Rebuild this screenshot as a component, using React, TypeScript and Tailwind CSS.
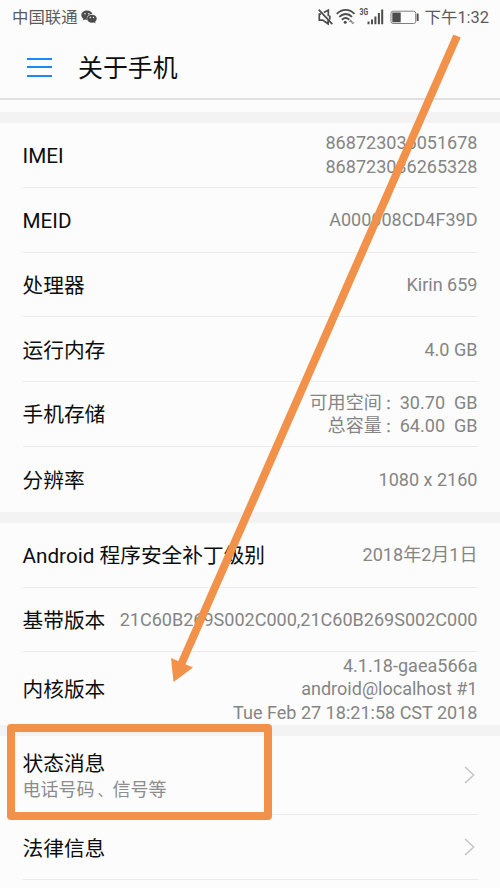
import type { ReactNode } from "react";

const label = "text-[20.7px] leading-[26px] text-[#0d0d0d] whitespace-nowrap";
const value = "pb-[2px] text-[18.05px] leading-[23.7px] text-[#858585] text-right whitespace-pre";

function Mark({ children }: { children: string }) {
  return <span className="pl-[3px] text-[15px] leading-none">{children}</span>;
}

function Row({ title, lines, last = false, className = "h-[64.8px]" }: { title: string; lines: ReactNode[]; last?: boolean; className?: string }) {
  return (
    <div className={`mx-[22.5px] flex shrink-0 items-center justify-between pt-[2.5px] ${last ? "" : "border-b border-[#ebebeb]"} ${className}`}>
      <span className={label}>{title}</span>
      <div className={value}>
        {lines.map((line, i) => (
          <div key={i}>{line}</div>
        ))}
      </div>
    </div>
  );
}

function Chevron() {
  return (
    <svg className="mr-[3px] h-[18px] w-[11px]" viewBox="0 0 11 18" fill="none" stroke="#c6c6c6" strokeWidth="1.6">
      <path d="M1 1 9.6 9 1 17" />
    </svg>
  );
}

function LinkRow({ children, className }: { children: ReactNode; className: string }) {
  return (
    <div className={`mx-[22.5px] flex shrink-0 items-center justify-between border-b border-[#ebebeb] ${className}`}>
      <div className="pt-[4.5px]">{children}</div>
      <Chevron />
    </div>
  );
}

function Band() {
  return <div className="h-[11px] shrink-0 bg-[#f3f3f3]" />;
}

function WeChat() {
  return (
    <svg className="ml-[3px] h-[14px] w-[16px]" viewBox="0 0 16 14">
      <path fill="#4c4c4c" d="M6 .4C2.8.4.3 2.5.3 5.1c0 1.5.8 2.8 2.1 3.7L2 10.6l2-1 2 .3C5.200 6.500 7.600 4 11.500 4 11 1.900 8.700.4 6 .4Z" />
      <ellipse cx="10.900" cy="8.700" rx="4.800" ry="4" fill="#4c4c4c" />
      <path fill="#4c4c4c" d="m12.500 12 2 1.500-.4-2.300z" />
      <g fill="#fcfcfc">
        <circle cx="4" cy="3.700" r=".75" />
        <circle cx="7.800" cy="3.700" r=".75" />
        <circle cx="9.300" cy="7.500" r=".65" />
        <circle cx="12.500" cy="7.500" r=".65" />
      </g>
    </svg>
  );
}

function StatusIcons() {
  return (
    <svg className="h-[20px] w-[102px]" viewBox="318 7 102 20" fill="none" stroke="#4c4c4c">
      <path strokeWidth="1.7" d="M318.700 9.700 332.300 24.200M321 14.200h-1.700v5.900h3.300l5.500 3.700v-4.300M323.800 12.600l4.500-2.500v6.200M329.800 19.500v-4" />
      <path strokeWidth="1.900" d="M336.800 13.900c5.300-5.300 12.600-5.300 17.600 0M339.300 16.900c3.900-3.800 9-3.800 12.700 0M341.900 19.700c2.300-2.100 5.200-2.100 7.400 0" />
      <circle cx="345.200" cy="22.200" r="1.500" fill="#4c4c4c" stroke="none" />
      <path fill="#858585" stroke="none" d="m350.800 19.600-2.100 2.500h4.200zM352.700 24.200l-2.100-2h4.200z" />
      <text x="359.500" y="15.300" fontSize="8.500" fontWeight="700" textLength="8.500" lengthAdjust="spacingAndGlyphs" fill="#4c4c4c" stroke="none">3G</text>
      <path strokeWidth="2" d="M368.500 21.500v2.700M372 19.500v4.700M375.400 16.500v7.700M378.900 13v11.200M382.200 9.500v14.700" />
      <rect x="391" y="11.200" width="24.700" height="12.300" rx="2" strokeWidth="1" stroke="#808080" />
      <path fill="#4c4c4c" stroke="none" d="M392.300 12.600h8.400v9.600h-8.400zM416.700 13.600h1.900v7.500h-1.900z" />
    </svg>
  );
}

export default function App() {
  return (
    <main className="relative flex h-[888px] w-[500px] flex-col overflow-hidden bg-[#fcfcfc] font-['Roboto','Noto_Sans_CJK_SC',sans-serif]">
      <div className="flex h-[34px] shrink-0 items-center justify-between pl-[12px] pr-[11px] text-[16.4px] leading-[20px] text-[#5a5a5a]">
        <div className="flex items-center">
          <span className="pt-px">中国联通</span>
          <WeChat />
        </div>
        <div className="flex items-center gap-[5px]">
          <StatusIcons />
          <span className="pt-px">下午1:32</span>
        </div>
      </div>
      <header className="flex h-[66px] shrink-0 items-center border-b-2 border-[#e0e0e0] pl-[26.5px] pt-[2px]">
        <div className="flex w-[25px] flex-col gap-[6.5px]">
          <div className="h-[2px] bg-[#1f86fb]" />
          <div className="h-[2px] bg-[#1f86fb]" />
          <div className="h-[2px] bg-[#1f86fb]" />
        </div>
        <h1 className="ml-[26.5px] pt-[3px] text-[24.9px] leading-[34px] text-[#0d0d0d]">关于手机</h1>
      </header>
      <div className="h-[12px] shrink-0" />
      <Band />
      <Row title="IMEI" lines={["868723036051678", "868723036265328"]} />
      <Row title="MEID" lines={["A000008CD4F39D"]} />
      <Row title="处理器" lines={["Kirin 659"]} />
      <Row title="运行内存" lines={["4.0 GB"]} />
      <Row title="手机存储" lines={[<>可用空间<Mark>：</Mark>30.70  GB</>, <>总容量<Mark>：</Mark>64.00  GB</>]} />
      <Row title="分辨率" lines={["1080 x 2160"]} last />
      <Band />
      <Row title="Android 程序安全补丁级别" lines={["2018年2月1日"]} />
      <Row title="基带版本" lines={["21C60B269S002C000,21C60B269S002C000"]} />
      <Row title="内核版本" lines={["4.1.18-gaea566a", "android@localhost #1", "Tue Feb 27 18:21:58 CST 2018"]} last className="h-[73px]" />
      <Band />
      <LinkRow className="h-[78.5px]">
        <div className={label}>状态消息</div>
        <div className="text-[18px] leading-[26px] text-[#8c8c8c]">电话号码<Mark>、</Mark>信号等</div>
      </LinkRow>
      <LinkRow className="h-[64.8px]">
        <span className={label}>法律信息</span>
      </LinkRow>
      <div className="absolute left-[7px] top-[724px] h-[95.5px] w-[265px] rounded-[4px] border-8 border-[#f29149]" />
      <svg className="absolute inset-0 h-[888px] w-[500px]" viewBox="0 0 500 888">
        <path d="M457 36 180 667" stroke="#f29149" strokeWidth="8" />
        <path d="m171 658 22 9.500-19.500 14.500z" fill="#f29149" />
      </svg>
    </main>
  );
}
